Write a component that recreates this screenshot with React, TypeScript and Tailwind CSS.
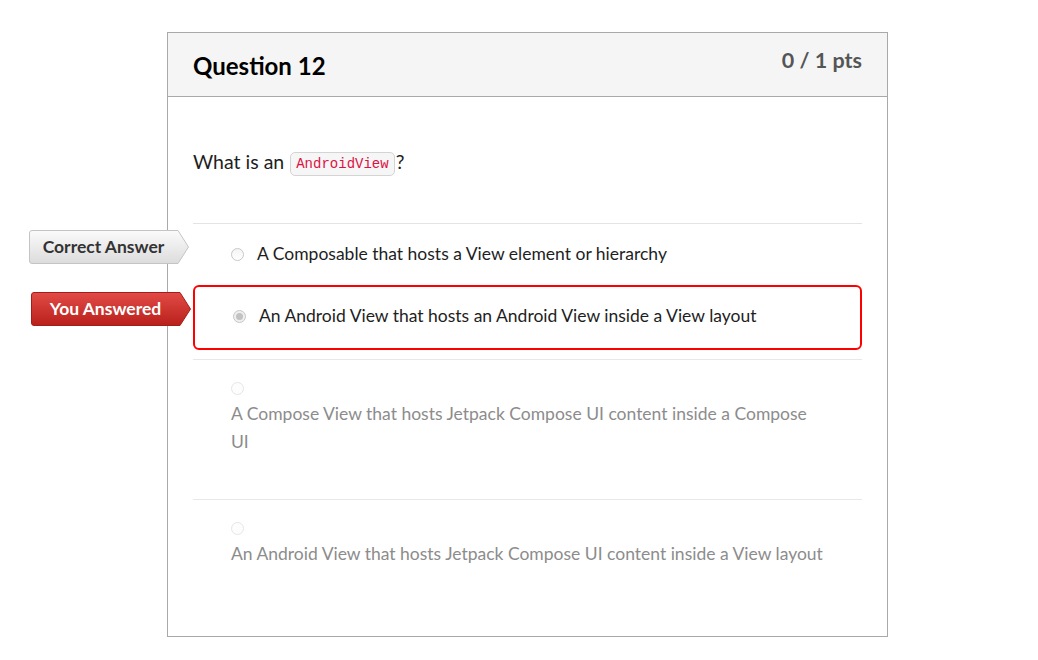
import React from 'react';

interface Answer {
  text: string;
  state: 'correct' | 'chosen' | 'other';
}

const answers: Answer[] = [
  { text: 'A Composable that hosts a View element or hierarchy', state: 'correct' },
  { text: 'An Android View that hosts an Android View inside a View layout', state: 'chosen' },
  { text: 'A Compose View that hosts Jetpack Compose UI content inside a Compose UI', state: 'other' },
  { text: 'An Android View that hosts Jetpack Compose UI content inside a View layout', state: 'other' },
];

function Flag({ label, red }: { label: string; red?: boolean }) {
  const id = red ? 'flagRed' : 'flagGrey';
  return (
    <div className="relative w-[161px] h-[34px]">
      <svg width="161" height="34" viewBox="0 0 161 34" className="absolute inset-0">
        <defs>
          <linearGradient id={id} x1="0" y1="0" x2="0" y2="1">
            {red ? (
              <>
                <stop offset="0" stopColor="#e24b45" />
                <stop offset="1" stopColor="#b9201c" />
              </>
            ) : (
              <>
                <stop offset="0" stopColor="#fbfbfb" />
                <stop offset="1" stopColor="#dcdcdc" />
              </>
            )}
          </linearGradient>
        </defs>
        <path
          d="M0.5,3 Q0.5,0.5 3,0.5 H149 L159.5,17 L149,33.5 H3 Q0.5,33.5 0.5,31 Z"
          fill={`url(#${id})`}
          stroke={red ? '#a51d1a' : '#c4c4c4'}
        />
      </svg>
      <span
        className={`absolute inset-0 flex items-center justify-center pr-[12px] text-[17.5px] font-bold leading-none ${red ? 'text-white' : 'text-[#333]'}`}
      >
        {label}
      </span>
    </div>
  );
}

function Radio({ state }: { state: Answer['state'] }) {
  if (state === 'chosen') {
    return (
      <span className="flex items-center justify-center w-[13px] h-[13px] rounded-full border border-[#c6c6c6] bg-[#efefef] shrink-0">
        <span className="w-[7px] h-[7px] rounded-full bg-[#c2c2c2]" />
      </span>
    );
  }
  return (
    <span
      className={`block w-[13px] h-[13px] rounded-full border shrink-0 ${state === 'correct' ? 'border-[#c8c8c8] bg-gradient-to-b from-[#f4f4f4] to-white' : 'border-[#e6e6e6] bg-[#fdfdfd]'}`}
    />
  );
}

export default function App() {
  return (
    <div className="min-h-screen bg-white pt-[32px] pl-[167px] font-['Lato',sans-serif]">
      <div className="w-[721px] border border-[#a9a9a9]">
        <div className="h-[64px] bg-[#f5f5f5] border-b border-[#a9a9a9] flex justify-between px-[25px]">
          <h2 className="mt-[16px] text-[24px] leading-[33px] font-bold text-black">Question 12</h2>
          <div className="mt-[12px] text-[21.5px] leading-[30px] font-bold text-[#555]">0 / 1 pts</div>
        </div>

        <div className="px-[25px] pt-[51px] pb-[25px]">
          <p className="text-[19.5px] leading-[27px] text-[#1e1e1e] mb-[47px]">
            What is an{' '}
            <code className="inline-block mx-[1px] px-[5px] leading-[22px] text-[14px] font-['Liberation_Mono',monospace] text-[#dd1144] bg-[#f6f6f6] border border-[#d4d4d4] rounded-[5px] align-[1px]">
              AndroidView
            </code>
            ?
          </p>

          {answers.map((a, i) => {
            if (a.state === 'correct') {
              return (
                <div key={i} className="relative border-t border-[#e3e3e3] pl-[38px] pt-[16px] pb-[17px] flex items-center gap-[13px] text-[17.5px] leading-[28px] text-[#1e1e1e]">
                  <div className="absolute left-[-164px] top-[6px]">
                    <Flag label="Correct Answer" />
                  </div>
                  <Radio state={a.state} />
                  <span>{a.text}</span>
                </div>
              );
            }
            if (a.state === 'chosen') {
              return (
                <div key={i} className="relative pb-[9px]">
                  <div className="absolute left-[-162px] top-[7px]">
                    <Flag label="You Answered" red />
                  </div>
                  <div className="border-2 border-[#f00] rounded-[6px] pl-[38px] pt-[15px] pb-[18px] flex items-center gap-[13px] text-[17.5px] leading-[28px] text-[#1e1e1e]">
                    <Radio state={a.state} />
                    <span>{a.text}</span>
                  </div>
                </div>
              );
            }
            return (
              <div key={i} className="border-t border-[#e8e8e8] pl-[38px] pt-[22px] pb-[43px] text-[17.5px] leading-[28px] text-[#8c8c8c]">
                <Radio state={a.state} />
                <div className="mt-[5px] max-w-[596px]">{a.text}</div>
              </div>
            );
          })}
        </div>
      </div>
    </div>
  );
}
